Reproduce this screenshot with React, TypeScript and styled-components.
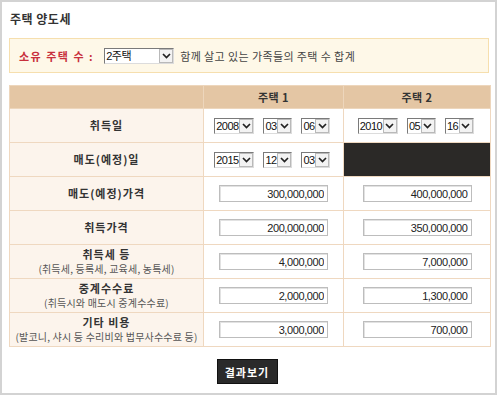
import React from 'react';
import styled, { createGlobalStyle } from 'styled-components';

const GlobalStyle = createGlobalStyle`
  html, body { margin: 0; padding: 0; background: #ffffff; }
  body { font-family: "Noto Sans CJK KR", "Noto Sans", sans-serif; color: #333; }
`;

const Frame = styled.div`
  box-sizing: border-box;
  width: 497px;
  height: 395px;
  border: 2px solid #d3d3d3;
  padding: 0 6px 0 7px;
`;

const Title = styled.h1`
  margin: 0;
  height: 36px;
  line-height: 34px;
  font-size: 12px;
  font-weight: bold;
  color: #333;
  padding-left: 1px;
  letter-spacing: 0.5px;
`;

const OwnerBox = styled.div`
  box-sizing: border-box;
  height: 35px;
  display: flex;
  align-items: center;
  padding-left: 9px;
  background: #fef8e8;
  border: 1px solid #f6dfae;
  font-size: 11px;
`;

const OwnerLabel = styled.span`
  color: #c8303c;
  font-weight: bold;
  letter-spacing: 1.5px;
  margin-right: 10px;
`;

const OwnerHint = styled.span`
  color: #444;
  margin-left: 6px;
  letter-spacing: 0.4px;
`;

const SelectBox = styled.div<{ $w: number }>`
  box-sizing: border-box;
  width: ${p => p.$w}px;
  height: 16px;
  display: inline-flex;
  align-items: stretch;
  background: #fff;
  border-top: 1px solid #7a7a7a;
  border-left: 1px solid #7a7a7a;
  border-right: 1px solid #dcdcdc;
  border-bottom: 1px solid #dcdcdc;
  font-family: "Liberation Sans", "Noto Sans CJK KR", sans-serif;
  font-size: 11px;
  color: #111;
`;

const SelectText = styled.span`
  flex: 1;
  line-height: 14px;
  padding-left: 1px;
  letter-spacing: -0.5px;
  overflow: hidden;
  white-space: nowrap;
`;

const SelectButton = styled.span`
  box-sizing: border-box;
  width: 14px;
  display: flex;
  align-items: center;
  justify-content: center;
  background: #f3f3f3;
  border: 1px solid #b9b9b9;
`;

const Chevron = () => (
  <svg width="9" height="6" viewBox="0 0 9 6">
    <path d="M1 1 L4.5 4.5 L8 1" fill="none" stroke="#222" strokeWidth="1.7" />
  </svg>
);

const Select = ({ value, w }: { value: string; w: number }) => (
  <SelectBox $w={w}>
    <SelectText>{value}</SelectText>
    <SelectButton>
      <Chevron />
    </SelectButton>
  </SelectBox>
);

const Table = styled.table`
  margin-top: 12px;
  width: 481px;
  border-collapse: collapse;
  table-layout: fixed;
  font-size: 11px;
`;

const HeadCell = styled.th`
  height: 22px;
  padding: 0;
  background: #e4c6a4;
  border: 1px solid #edd6bc;
  font-weight: bold;
  color: #333;
  letter-spacing: 0.5px;
`;

const LabelCell = styled.th`
  height: 33px;
  padding: 0;
  background: #fcf4ec;
  border: 1px solid #efd8c0;
  font-weight: bold;
  color: #333;
  letter-spacing: 1px;
  line-height: 15px;
  white-space: nowrap;
`;

const SubLabel = styled.span`
  display: block;
  font-weight: normal;
  font-size: 10px;
  line-height: 14px;
  color: #555;
  letter-spacing: 0.2px;
`;

const ValueCell = styled.td<{ $dark?: boolean }>`
  height: 33px;
  padding: 0;
  text-align: center;
  background: ${p => (p.$dark ? '#2b2927' : '#ffffff')};
  border: 1px solid #efd8c0;
`;

const DateGroup = styled.div`
  display: flex;
  justify-content: center;
  gap: 9px;
  padding-right: 3px;
`;

const Amount = styled.input`
  box-sizing: border-box;
  width: 109px;
  height: 17px;
  padding: 0 3px 0 0;
  text-align: right;
  font-family: "Liberation Sans", sans-serif;
  font-size: 11px;
  letter-spacing: -0.4px;
  color: #222;
  background: #fff;
  border: 1px solid #bdbdbd;
  box-shadow: inset 1px 1px 0 #e2e2e2;
  outline: none;
`;

const Actions = styled.div`
  display: flex;
  justify-content: center;
  padding-top: 12px;
  padding-right: 4px;
`;

const ResultButton = styled.button`
  width: 61px;
  height: 25px;
  background: #2a2a2a;
  color: #fff;
  border: 1px solid #111;
  font-family: "Noto Sans CJK KR", sans-serif;
  font-size: 11px;
  font-weight: bold;
  letter-spacing: 1px;
  padding: 0;
`;

type Row = {
  label: string;
  sub?: string;
  values: [string, string];
};

const amountRows: Row[] = [
  { label: '매도(예정)가격', values: ['300,000,000', '400,000,000'] },
  { label: '취득가격', values: ['200,000,000', '350,000,000'] },
  { label: '취득세 등', sub: '(취득세, 등록세, 교육세, 농특세)', values: ['4,000,000', '7,000,000'] },
  { label: '중계수수료', sub: '(취득시와 매도시 중계수수료)', values: ['2,000,000', '1,300,000'] },
  { label: '기타 비용', sub: '(발코니, 샤시 등 수리비와 법무사수수료 등)', values: ['3,000,000', '700,000'] },
];

const DateSelects = ({ y, m, d }: { y: string; m: string; d: string }) => (
  <DateGroup>
    <Select value={y} w={40} />
    <Select value={m} w={29} />
    <Select value={d} w={29} />
  </DateGroup>
);

export default function App() {
  return (
    <>
      <GlobalStyle />
      <Frame>
        <Title>주택 양도세</Title>
        <OwnerBox>
          <OwnerLabel>소유 주택 수 :</OwnerLabel>
          <Select value="2주택" w={70} />
          <OwnerHint>함께 살고 있는 가족들의 주택 수 합계</OwnerHint>
        </OwnerBox>
        <Table>
          <colgroup>
            <col style={{ width: 194 }} />
            <col style={{ width: 140 }} />
            <col style={{ width: 147 }} />
          </colgroup>
          <thead>
            <tr>
              <HeadCell />
              <HeadCell>주택 1</HeadCell>
              <HeadCell>주택 2</HeadCell>
            </tr>
          </thead>
          <tbody>
            <tr>
              <LabelCell>취득일</LabelCell>
              <ValueCell>
                <DateSelects y="2008" m="03" d="06" />
              </ValueCell>
              <ValueCell>
                <DateSelects y="2010" m="05" d="16" />
              </ValueCell>
            </tr>
            <tr>
              <LabelCell>매도(예정)일</LabelCell>
              <ValueCell>
                <DateSelects y="2015" m="12" d="03" />
              </ValueCell>
              <ValueCell $dark />
            </tr>
            {amountRows.map(row => (
              <tr key={row.label}>
                <LabelCell>
                  {row.label}
                  {row.sub && <SubLabel>{row.sub}</SubLabel>}
                </LabelCell>
                {row.values.map((v, i) => (
                  <ValueCell key={i}>
                    <Amount readOnly value={v} />
                  </ValueCell>
                ))}
              </tr>
            ))}
          </tbody>
        </Table>
        <Actions>
          <ResultButton>결과보기</ResultButton>
        </Actions>
      </Frame>
    </>
  );
}
